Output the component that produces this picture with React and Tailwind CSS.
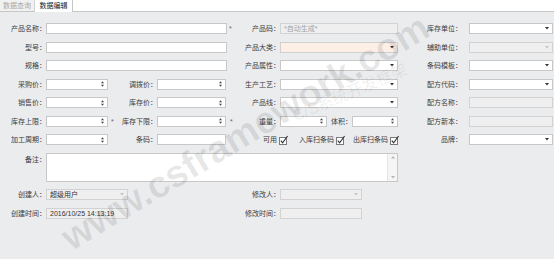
import React from "react";

const FONT = "font-['Liberation_Sans','Noto_Sans_CJK_SC',sans-serif]";

function Caret({ disabled }) {
  return (
    <svg width="4" height="3" viewBox="0 0 4 3" className="ml-auto mr-[3px] shrink-0">
      <path d="M0 0 L4 0 L2 2.5 Z" fill={disabled ? "#c4c4c4" : "#333"} />
    </svg>
  );
}

function Spin() {
  return (
    <svg width="3" height="6" viewBox="0 0 3 6" className="ml-auto mr-[3px] shrink-0">
      <path d="M0 2.3 L3 2.3 L1.5 0.3 Z" fill="#444" />
      <path d="M0 3.7 L3 3.7 L1.5 5.7 Z" fill="#444" />
    </svg>
  );
}

function Label({ className = "", children }) {
  return (
    <div className={`shrink-0 text-right text-[7px] leading-[11px] text-[#3c3c3c] whitespace-nowrap ${className}`}>
      {children}
    </div>
  );
}

function Field({ className = "", kind, disabled, peach, text, muted }) {
  const tone = disabled
    ? "bg-[#efefef] border-[#d2d2d2]"
    : peach
    ? "bg-[#fdefe6] border-[#d0d0d0]"
    : "bg-white border-[#c8c8c8]";
  return (
    <div className={`shrink-0 h-[11px] border ${tone} flex items-center ${className}`}>
      {text && (
        <span className={`pl-[3px] text-[7px] leading-none whitespace-nowrap ${muted ? "text-[#a2a2a2]" : "text-[#333]"}`}>
          {text}
        </span>
      )}
      {kind === "select" && <Caret disabled={disabled} />}
      {kind === "spin" && <Spin />}
    </div>
  );
}

function Star({ className = "" }) {
  return <div className={`shrink-0 text-[7px] leading-[11px] text-[#666] ${className}`}>*</div>;
}

function Check({ label, className = "" }) {
  return (
    <div className={`shrink-0 flex items-center gap-[2px] whitespace-nowrap ${className}`}>
      <span>{label}</span>
      <svg width="10" height="10" viewBox="0 0 10 10" className="shrink-0">
        <rect x="0.5" y="2.5" width="7" height="7" fill="white" stroke="#7a7a7a" />
        <path d="M1.8 5.6 L3.6 7.8 L8.6 1" stroke="#333" strokeWidth="1.1" fill="none" />
      </svg>
    </div>
  );
}

function Row({ children }) {
  return <div className="flex items-center h-[11px]">{children}</div>;
}

export default function App() {
  return (
    <div className={`w-[554px] h-[259px] overflow-hidden bg-white ${FONT}`}>
      {/* tabs */}
      <div className="h-[12px] flex border-b border-[#c6c6c6] bg-white">
        <div className="w-[35px] bg-[#f1f1f1] border-r border-[#d4d4d4] text-[7px] leading-[11px] text-[#a9a9a9] text-center whitespace-nowrap">
          数据查询
        </div>
        <div className="w-[38px] h-[12px] bg-white border-r border-[#c6c6c6] text-[7px] leading-[11px] text-[#222] text-center whitespace-nowrap">
          数据编辑
        </div>
      </div>

      <div className="relative h-[247px] bg-[#ebecee] overflow-hidden">
        <div className="flex flex-col gap-[7.5px] pt-[11px]">
          <Row>
            <Label className="w-[46px]">产品名称：</Label>
            <Field className="w-[181px]" />
            <Star className="w-[8px] pl-[2px]" />
            <Label className="w-[45px]">产品码：</Label>
            <Field className="w-[118px]" disabled text="*自动生成*" muted />
            <Label className="w-[64px]">库存单位：</Label>
            <Field className="w-[84px] ml-[7px]" kind="select" />
          </Row>
          <Row>
            <Label className="w-[46px]">型号：</Label>
            <Field className="w-[181px]" />
            <Label className="w-[53px]">产品大类：</Label>
            <Field className="w-[118px]" peach kind="select" />
            <Label className="w-[64px]">辅助单位：</Label>
            <Field className="w-[84px] ml-[7px]" disabled kind="select" />
          </Row>
          <Row>
            <Label className="w-[46px]">规格：</Label>
            <Field className="w-[181px]" />
            <Label className="w-[53px]">产品属性：</Label>
            <Field className="w-[118px]" kind="select" />
            <Label className="w-[64px]">条码模板：</Label>
            <Field className="w-[84px] ml-[7px]" kind="select" />
          </Row>
          <Row>
            <Label className="w-[46px]">采购价：</Label>
            <Field className="w-[62px]" kind="spin" />
            <Label className="w-[49px]">调拨价：</Label>
            <Field className="w-[69px]" kind="spin" />
            <Label className="w-[54px]">生产工艺：</Label>
            <Field className="w-[118px]" kind="select" />
            <Label className="w-[64px]">配方代码：</Label>
            <Field className="w-[84px] ml-[7px]" kind="select" />
          </Row>
          <Row>
            <Label className="w-[46px]">销售价：</Label>
            <Field className="w-[62px]" kind="spin" />
            <Label className="w-[49px]">库存价：</Label>
            <Field className="w-[69px]" kind="spin" />
            <Label className="w-[54px]">产品线：</Label>
            <Field className="w-[118px]" kind="select" />
            <Label className="w-[64px]">配方名称：</Label>
            <Field className="w-[84px] ml-[7px]" disabled />
          </Row>
          <Row>
            <Label className="w-[46px]">库存上限：</Label>
            <Field className="w-[62px]" kind="spin" />
            <Star className="w-[8px] pl-[3px]" />
            <Label className="w-[41px]">库存下限：</Label>
            <Field className="w-[69px]" kind="spin" />
            <Star className="w-[10px] pl-[4px]" />
            <Label className="w-[44px]">重量：</Label>
            <Field className="w-[47px]" kind="spin" />
            <Label className="w-[25px]">体积：</Label>
            <Field className="w-[46px]" kind="spin" />
            <Label className="w-[64px]">配方新本：</Label>
            <Field className="w-[84px] ml-[7px]" disabled />
          </Row>
          <Row>
            <Label className="w-[46px]">加工周期：</Label>
            <Field className="w-[62px]" kind="spin" />
            <Label className="w-[49px]">条码：</Label>
            <Field className="w-[69px]" />
            <div className="w-[172px] shrink-0 flex items-center text-[7px] leading-[11px] text-[#3c3c3c]">
              <Check label="可用" className="ml-[37px]" />
              <Check label="入库扫条码" className="ml-[10px]" />
              <Check label="出库扫条码" className="ml-[7px]" />
            </div>
            <Label className="w-[64px]">品牌：</Label>
            <Field className="w-[84px] ml-[7px]" kind="select" />
          </Row>
          <div className="flex items-start h-[29px]">
            <Label className="w-[46px] pt-[1px]">备注：</Label>
            <div className="w-[352px] h-[29px] border border-[#c8c8c8] bg-white flex">
              <div className="ml-auto w-[10px] h-full bg-[#f5f5f5] border-l border-[#e4e4e4] flex flex-col items-center justify-between py-[2px]">
                <svg width="4" height="3" viewBox="0 0 4 3"><path d="M0 2.5 L4 2.5 L2 0 Z" fill="#b5b5b5" /></svg>
                <svg width="4" height="3" viewBox="0 0 4 3"><path d="M0 0 L4 0 L2 2.5 Z" fill="#b5b5b5" /></svg>
              </div>
            </div>
          </div>
          <Row>
            <Label className="w-[46px]">创建人：</Label>
            <Field className="w-[82px]" disabled kind="select" text="超级用户" />
            <Label className="w-[152px]">修改人：</Label>
            <Field className="w-[82px]" disabled kind="select" />
          </Row>
          <Row>
            <Label className="w-[46px]">创建时间：</Label>
            <Field className="w-[82px]" disabled text="2016/10/25 14:13:19" />
            <Label className="w-[152px]">修改时间：</Label>
            <Field className="w-[82px]" disabled />
          </Row>
        </div>

        {/* watermark */}
        <div className="pointer-events-none absolute left-[245px] top-[120px] -translate-x-1/2 -translate-y-1/2 -rotate-[31deg] whitespace-nowrap text-[38px] font-bold leading-none text-black/[0.09] font-['Liberation_Sans',sans-serif]">
          www.csframework.com
        </div>
        <div className="pointer-events-none absolute left-[350px] top-[81px] -translate-x-1/2 -translate-y-1/2 -rotate-[23deg] whitespace-nowrap text-[16px] leading-none text-black/[0.07]">
          C/S系统开发框架
        </div>
      </div>
    </div>
  );
}
